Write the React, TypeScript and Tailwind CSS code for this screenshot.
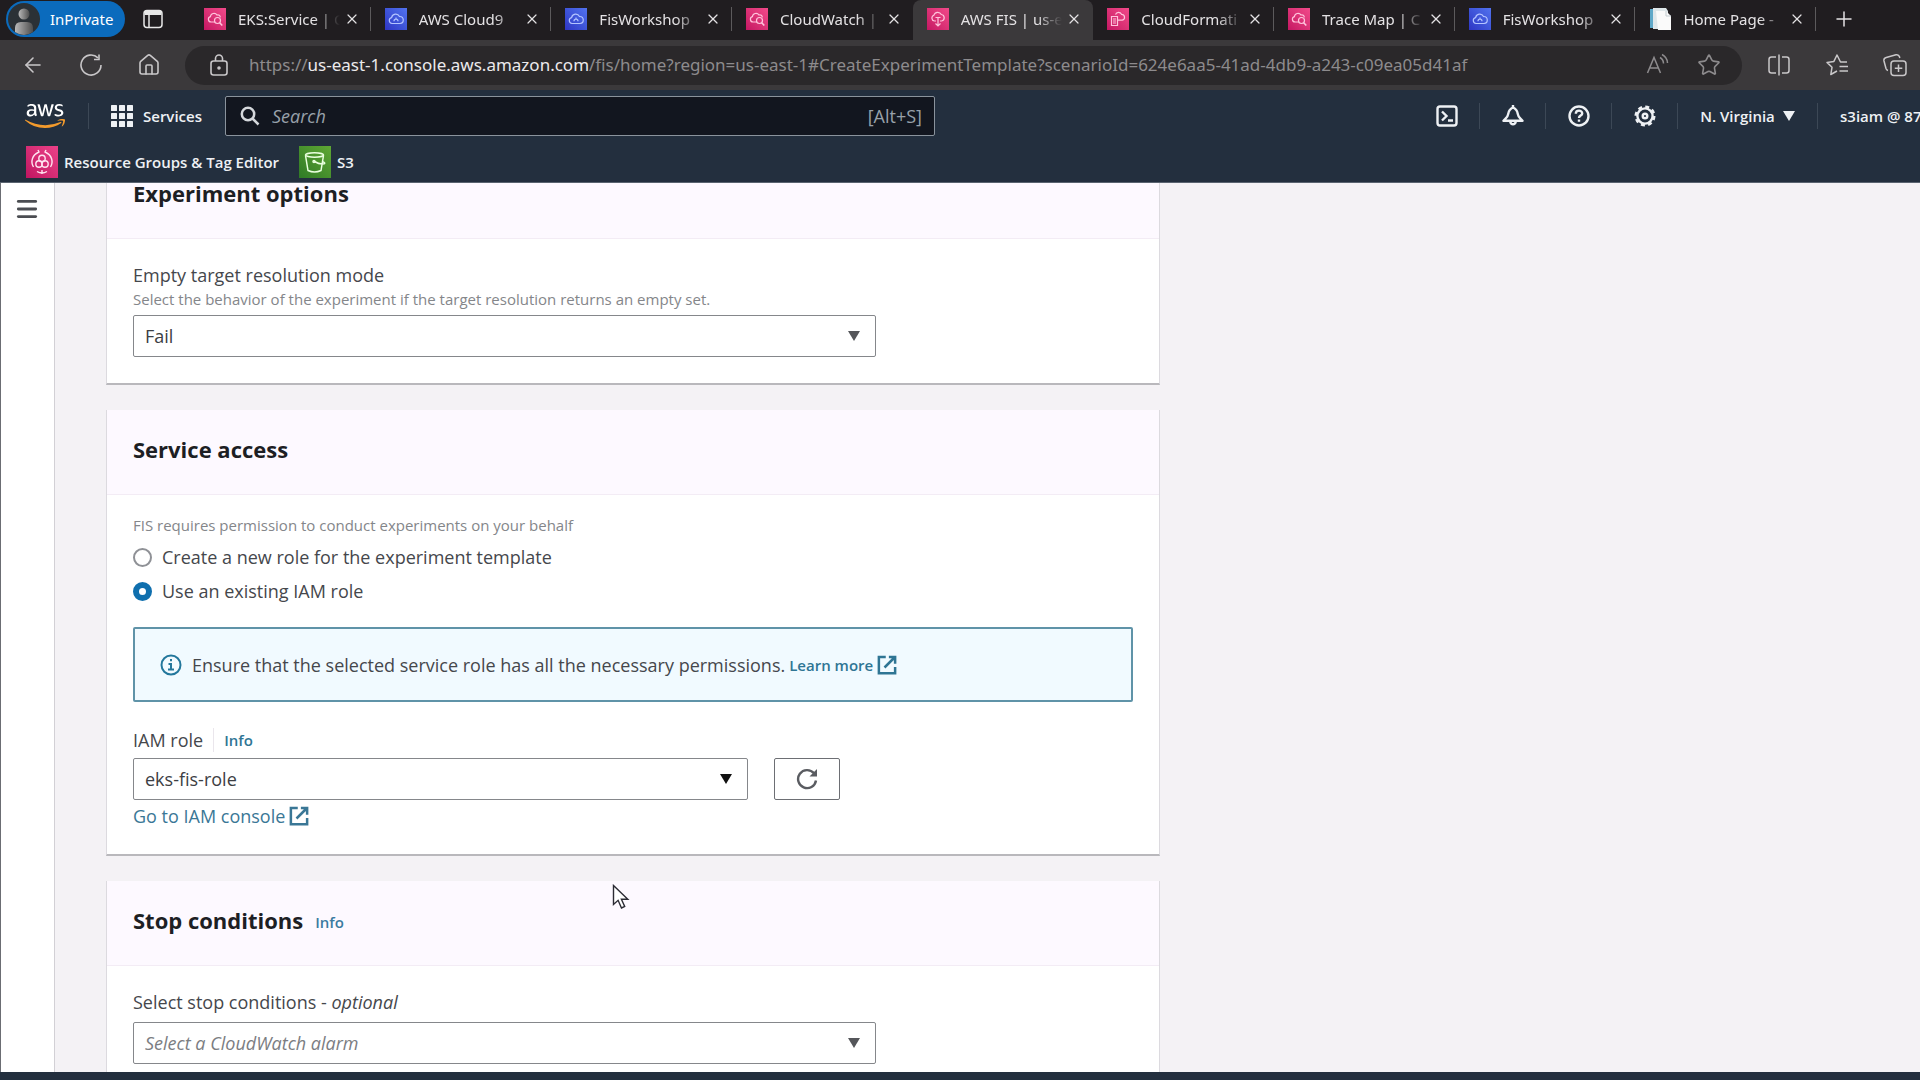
import type { ReactNode } from 'react'
import { ArrowLeft, House, Menu, Plus, Star, X } from 'lucide-react'
import { FaAws } from 'react-icons/fa'

type FaviconKind = 'cloudwatch' | 'cloud9' | 'fis' | 'cloudformation' | 'page'

const tabs: { title: string; icon: FaviconKind; active?: boolean }[] = [
  { title: 'EKS:Service | C', icon: 'cloudwatch' },
  { title: 'AWS Cloud9', icon: 'cloud9' },
  { title: 'FisWorkshop', icon: 'cloud9' },
  { title: 'CloudWatch |', icon: 'cloudwatch' },
  { title: 'AWS FIS | us-e', icon: 'fis', active: true },
  { title: 'CloudFormati', icon: 'cloudformation' },
  { title: 'Trace Map | C', icon: 'cloudwatch' },
  { title: 'FisWorkshop', icon: 'cloud9' },
  { title: 'Home Page -', icon: 'page' },
]

function Favicon({ kind }: { kind: FaviconKind }) {
  if (kind === 'page') {
    return (
      <svg viewBox="0 0 22 22" className="size-[22px] shrink-0">
        <path d="M1 1h4v19H1z" fill="#5fa8c8" />
        <path d="M4 0h13l2 3v18H4z" fill="#dfe7ea" />
        <path d="M7 3h10l5 5v14H9z" fill="#fafafa" />
        <path d="M17 3v5h5" fill="none" stroke="#c3ccd0" />
      </svg>
    )
  }
  return (
    <span
      className={
        kind === 'cloud9'
          ? 'size-[22px] shrink-0 bg-linear-to-tr from-[#2f35c4] to-[#5272ee] text-[#b4c4ff]'
          : 'size-[22px] shrink-0 bg-linear-to-tr from-[#c51563] to-[#f2498a] text-[#ffc4dc]'
      }
    >
      <svg viewBox="0 0 22 22" className="size-[22px]" fill="none" stroke="currentColor" strokeWidth="1.2">
        {kind === 'cloudwatch' && (
          <>
            <path d="M11 14H7a2.700 2.700 0 0 1-.6-5.300A3.600 3.600 0 0 1 13 7a2.400 2.400 0 0 1 3.300 2.400" />
            <circle cx="13.500" cy="12.500" r="3" />
            <path d="m15.700 14.800 2.600 2.700" strokeWidth="1.600" />
          </>
        )}
        {kind === 'cloud9' && (
          <>
            <path d="M7 15.500a3 3 0 0 1-.4-5.900A4.200 4.200 0 0 1 14.500 8.500a3.500 3.500 0 0 1 .5 7z" />
            <path d="M9 13.200a2 2 0 0 1 4 0M11 9.500v1.500" />
          </>
        )}
        {kind === 'fis' && (
          <>
            <path d="M9 13H7.500a3 3 0 0 1-.6-5.800A4 4 0 0 1 14.300 6.500a3.300 3.300 0 0 1 .3 6.500H13" />
            <path d="M11 9v9M8.500 15.500 11 18l2.500-2.500M8.500 9.500h5" />
          </>
        )}
        {kind === 'cloudformation' && (
          <>
            <path d="M8.500 6.500a3.300 3.300 0 0 1 6-.2 3 3 0 0 1 .8 5.900H11" />
            <path d="M4.500 8.500h6v9h-6zM6 11h3M6 13h3M6 15h3" />
          </>
        )}
      </svg>
    </span>
  )
}

function TabStrip() {
  return (
    <div className="flex h-10 shrink-0 items-center bg-[#201d20] text-[15px] text-[#e4e2e4]">
      <div className="flex w-[190px] shrink-0 items-center pb-0.5 pl-1.5">
        <button className="flex h-9 items-center gap-2.5 rounded-full bg-[#0b6bbd] pr-3 pl-0.5 text-white">
          <svg viewBox="0 0 32 32" className="size-8">
            <defs>
              <linearGradient id="avatar">
                <stop offset="0" stopColor="#b9b9b9" />
                <stop offset="1" stopColor="#4d4d4d" />
              </linearGradient>
            </defs>
            <circle cx="16" cy="16" r="16" fill="#2b3136" />
            <circle cx="16" cy="11" r="5.500" fill="url(#avatar)" />
            <path d="M7 29v-4q0-6 6-6h6q6 0 6 6v4q-9 6-18 0" fill="url(#avatar)" />
          </svg>
          InPrivate
        </button>
        <button aria-label="Tab actions" className="ml-[18px]">
          <svg viewBox="0 0 20 20" className="size-5" fill="none" stroke="#e8e8e8" strokeWidth="1.500">
            <rect x="1" y="1.500" width="18" height="17" rx="3" />
            <path d="M1.500 4h17" strokeWidth="4" />
            <path d="M6 6v12" />
          </svg>
        </button>
      </div>
      {tabs.map((tab, i) => (
        <div
          key={i}
          className={
            tab.active
              ? 'flex h-10 min-w-0 flex-1 items-center rounded-t-lg bg-[#3b393b] pb-0.5 pl-3.5'
              : 'flex h-10 min-w-0 flex-1 items-center pb-0.5 pl-3.5'
          }
        >
          <Favicon kind={tab.icon} />
          <span className="ml-3 min-w-0 flex-1 overflow-hidden whitespace-nowrap [mask-image:linear-gradient(to_right,black_75%,transparent)]">
            {tab.title}
          </span>
          <button aria-label="Close tab" className="mr-2.5 ml-1">
            <X size={16} strokeWidth={1.8} />
          </button>
          <span className={tab.active || tabs[i + 1]?.active ? 'h-6 w-px' : 'h-6 w-px bg-[#5c5a5c]'} />
        </div>
      ))}
      <div className="flex w-[104px] shrink-0 pb-0.5 pl-4">
        <button aria-label="New tab">
          <Plus size={24} strokeWidth={1.5} />
        </button>
      </div>
    </div>
  )
}

function AddressBar() {
  return (
    <div className="flex h-[50px] shrink-0 items-center bg-[#3b393b] pr-[13px] pl-[21px] text-[#c9c7c9]">
      <div className="flex gap-[34px]">
        <button aria-label="Back">
          <ArrowLeft size={24} strokeWidth={1.6} />
        </button>
        <button aria-label="Refresh">
          <svg viewBox="0 0 24 24" className="size-6" fill="none" stroke="currentColor" strokeWidth="1.600">
            <path d="M22 12a10 10 0 1 1-3-7.100" />
            <path d="M20 1.500v5h-5" />
          </svg>
        </button>
        <button aria-label="Home">
          <House size={24} strokeWidth={1.6} />
        </button>
      </div>
      <div className="ml-6 flex h-[39px] min-w-0 flex-1 items-center rounded-full bg-[#2a282a] pr-[21px] pl-[22px]">
        <svg viewBox="0 0 24 24" className="size-6 shrink-0" fill="none" stroke="currentColor" strokeWidth="1.600">
          <rect x="4" y="8" width="16" height="14" rx="2.500" />
          <path d="M8.500 8V5.500a3.500 3.500 0 0 1 7 0V8" />
          <circle cx="12" cy="15" r="1" fill="currentColor" />
        </svg>
        <div className="ml-[18px] min-w-0 flex-1 overflow-hidden text-[17px] whitespace-nowrap text-[#8d8b8d]">
          https://<span className="text-[#eceaec]">us-east-1.console.aws.amazon.com</span>
          /fis/home?region=us-east-1#CreateExperimentTemplate?scenarioId=624e6aa5-41ad-4db9-a243-c09ea05d41af
        </div>
        <button aria-label="Read aloud" className="mr-[27px] text-[#8d8b8d]">
          <svg viewBox="0 0 24 24" className="size-6" fill="none" stroke="currentColor" strokeWidth="1.500">
            <path d="M1.500 20 8 4.500 14.500 20M4 15h8M14 4.500a7 7 0 0 1 3.500 6M16 1.500a10 10 0 0 1 5.500 8.500" />
          </svg>
        </button>
        <button aria-label="Add to favorites" className="text-[#8d8b8d]">
          <Star size={24} strokeWidth={1.6} />
        </button>
      </div>
      <div className="ml-[25px] flex gap-[34px]">
        <button aria-label="Split screen">
          <svg viewBox="0 0 24 24" className="size-6" fill="none" stroke="currentColor" strokeWidth="1.500">
            <path d="M9 4H4.500A2.500 2.500 0 0 0 2 6.500v11A2.500 2.500 0 0 0 4.500 20H9M15 4h4.500A2.500 2.500 0 0 1 22 6.500v11a2.500 2.500 0 0 1-2.500 2.500H15M12 1.500v21" />
          </svg>
        </button>
        <button aria-label="Favorites">
          <svg viewBox="0 0 24 24" className="size-6" fill="none" stroke="currentColor" strokeWidth="1.500" strokeLinejoin="round">
            <path d="M22 9h-6.500L12 2 8.900 8.400 2 9.400l5 4.900L5.800 21.500 12 18M14.500 13.500H23M14.500 18H23" />
          </svg>
        </button>
        <button aria-label="Collections">
          <svg viewBox="0 0 24 24" className="size-6" fill="none" stroke="currentColor" strokeWidth="1.500">
            <rect x="8" y="8" width="15" height="14.500" rx="3" />
            <path d="M15.500 11.500v7.500M11.800 15.200h7.500M5 17.500a3 3 0 0 1-2-2L1 8a3 3 0 0 1 2.200-3.500L13 1.800a3 3 0 0 1 3.500 2l.3 1.200" />
          </svg>
        </button>
      </div>
    </div>
  )
}

function NavCell({ label, children }: { label: string; children: ReactNode }) {
  return (
    <button aria-label={label} className="flex h-[26px] w-[66px] items-center justify-center border-r border-[#3c4856]">
      <svg viewBox="0 0 22 22" className="size-[22px]" fill="none" stroke="currentColor" strokeWidth="2.400">
        {children}
      </svg>
    </button>
  )
}

function ConsoleNav() {
  return (
    <header className="flex h-[93px] shrink-0 flex-col border-b border-[#5a6470] bg-[#232f3e] text-[15px] text-[#eef1f4]">
      <div className="flex h-[52px] items-center">
        <svg className="size-0">
          <linearGradient id="aws" x1="0" y1="0" x2="0" y2="1">
            <stop offset="0.620" stopColor="#ffffff" />
            <stop offset="0.620" stopColor="#f29a2c" />
          </linearGradient>
        </svg>
        <a href="#home" aria-label="AWS" className="flex h-[26px] w-[89px] items-center border-r border-[#3c4856] pl-[25px]">
          <FaAws size={40} className="w-10 fill-[url(#aws)]" />
        </a>
        <button className="ml-[22px] flex w-[114px] items-center gap-2.5 font-semibold">
          <svg viewBox="0 0 22 22" className="size-[22px]" fill="currentColor">
            {[0, 8, 16].map((y) => [0, 8, 16].map((x) => <rect key={`${x}-${y}`} x={x} y={y} width="6" height="6" rx="0.500" />))}
          </svg>
          Services
        </button>
        <label className="flex h-10 w-[710px] items-center rounded-xs border border-[#8a939c] bg-[#12161f] pr-3 pl-3.5 text-[#98a1aa]">
          <svg viewBox="0 0 20 20" className="size-5 shrink-0" fill="none" stroke="#d5d8dc" strokeWidth="2.500">
            <circle cx="8" cy="8" r="6.200" />
            <path d="m12.500 12.500 6 6" />
          </svg>
          <input
            type="search"
            aria-label="Search"
            placeholder="Search"
            className="ml-3 min-w-0 flex-1 bg-transparent text-lg outline-none placeholder:text-[#98a1aa] placeholder:italic"
          />
          <span className="text-lg">[Alt+S]</span>
        </label>
        <div className="ml-auto flex items-center overflow-hidden font-semibold">
          <NavCell label="CloudShell">
            <rect x="1.500" y="1.500" width="19" height="19" rx="2.500" />
            <path d="m6 6.500 4.500 4.500L6 15.500M12 15.500h5" />
          </NavCell>
          <NavCell label="Notifications">
            <path d="M11 2.500c-3.500 1.500-4.500 4-4.800 6.500C6 12 3.500 13.500 1.500 15.800h19c-2-2.300-4.500-3.800-4.700-6.800-.3-2.500-1.300-5-4.800-6.500Z" strokeLinejoin="round" />
            <path d="M8.200 16.500a2.900 3.800 0 0 0 5.600 0M11 0v2.500" />
          </NavCell>
          <NavCell label="Help">
            <circle cx="11" cy="11" r="9.500" />
            <path d="M7.800 8.800c0-4.200 6.400-4 6.400-.4 0 2.200-3.200 2.200-3.200 4.600M11 14.500v2.200" />
          </NavCell>
          <NavCell label="Settings">
            <circle cx="11" cy="11" r="7.600" />
            <circle cx="11" cy="11" r="9.300" strokeDasharray="4 3.300" />
            <circle cx="11" cy="11" r="2.300" />
          </NavCell>
          <button className="flex h-[26px] w-[140px] items-center justify-center gap-2 border-r border-[#3c4856]">
            N. Virginia
            <Caret />
          </button>
          <button className="w-[102px] pl-[22px] text-left whitespace-nowrap">s3iam @ 87</button>
        </div>
      </div>
      <div className="flex h-10 items-center pl-[26px] font-semibold">
        <a href="#resource-groups" className="flex items-center gap-1.5">
          <span className="bg-linear-to-tr from-[#c01461] to-[#ec4189]">
            <svg viewBox="0 0 32 32" className="size-8" fill="none" stroke="#ffe3ef" strokeWidth="1.400">
              <path d="M12 6.500a10 10 0 0 0-4.500 14.500M20 6.500a10 10 0 0 1 4.500 14.500M11 25.500a10 10 0 0 0 10 0M16 24v4M10 8l3-2-1-2M22 8l-3-2 1-2" />
              <circle cx="16" cy="12.500" r="3.200" />
              <circle cx="13" cy="18" r="3.200" />
              <circle cx="19" cy="18" r="3.200" />
            </svg>
          </span>
          Resource Groups &amp; Tag Editor
        </a>
        <a href="#s3" className="ml-5 flex items-center gap-1.5">
          <span className="bg-linear-to-tr from-[#2f7a26] to-[#5fa834]">
            <svg viewBox="0 0 32 32" className="size-8" fill="none" stroke="#eaffdf" strokeWidth="1.500">
              <ellipse cx="15.500" cy="9" rx="9" ry="2.200" />
              <path d="M6.500 9.500 9 24.500q6.500 3 13 0l2.500-15M15.500 15.500q5 3 9.500 2.300 2-.8-1.500-2.500" />
              <circle cx="15" cy="15.500" r="1" />
            </svg>
          </span>
          S3
        </a>
      </div>
    </header>
  )
}

function Caret() {
  return (
    <svg viewBox="0 0 12 10" className="h-2.5 w-3" fill="currentColor">
      <path d="M0 0h12L6 10z" />
    </svg>
  )
}

function ExternalIcon() {
  return (
    <svg viewBox="0 0 16 16" className="size-5" fill="none" stroke="currentColor" strokeWidth="2">
      <path d="M9.500 1.500h5V7M6 10l8-8M14.500 9.500v5h-13v-13H7" />
    </svg>
  )
}

function Card({ title, info, children }: { title: string; info?: boolean; children: ReactNode }) {
  return (
    <section className="max-w-[1054px] border-x border-b-2 border-x-[#dcdadf] border-b-[#b9b8bc] bg-white">
      <div className="flex h-[85px] items-center gap-3 border-b border-[#f3ecf5] bg-[#fdf9ff] px-[26px] pt-0.5 pb-2">
        <h2 className="text-[22px] font-bold text-[#1d1f24]">{title}</h2>
        {info && (
          <a href="#info" className="mt-1 text-[15px] font-semibold text-[#3a7ba0]">
            Info
          </a>
        )}
      </div>
      {children}
    </section>
  )
}

type SelectProps = { id: string; value: string; className: string; placeholder?: boolean; dark?: boolean }

function Select({ id, value, className, placeholder, dark }: SelectProps) {
  return (
    <div className={`relative ${className}`}>
      <select
        id={id}
        className={
          placeholder
            ? 'h-[42px] w-full appearance-none rounded-xs border border-[#85878b] bg-white pl-[11px] text-lg text-[#7b7d82] italic'
            : 'h-[42px] w-full appearance-none rounded-xs border border-[#85878b] bg-white pl-[11px] text-lg text-[#3c3e43]'
        }
      >
        <option>{value}</option>
      </select>
      <span
        className={
          dark
            ? 'pointer-events-none absolute top-4 right-4 text-[#111111]'
            : 'pointer-events-none absolute top-4 right-4 text-[#55565a]'
        }
      >
        <Caret />
      </span>
    </div>
  )
}

export default function App() {
  return (
    <div className="flex h-screen flex-col overflow-hidden bg-[#f4f2f5] font-['Noto_Sans',sans-serif]">
      <TabStrip />
      <AddressBar />
      <div className="flex min-h-0 flex-1 flex-col font-['Open_Sans',sans-serif]">
        <ConsoleNav />
        <div className="flex min-h-0 flex-1 border-l border-[#6b6d73]">
          <aside className="w-[54px] shrink-0 border-r border-[#d2d0d5] bg-white pt-[13px] pl-[13px]">
            <button aria-label="Open navigation" className="text-[#4b4d52]">
              <Menu size={26} strokeWidth={2.6} />
            </button>
          </aside>
          <main className="min-w-0 flex-1 overflow-hidden pl-[51px]">
            {/* form is scrolled part way down, first card header runs under the nav */}
            <form className="-mt-[29px] flex flex-col gap-[25px] text-lg leading-6 text-[#45474c]">
              <Card title="Experiment options">
                <div className="flex flex-col px-[26px] pt-6 pb-[26px]">
                  <label htmlFor="mode">Empty target resolution mode</label>
                  <p className="text-[15px] leading-6 text-[#84868a]">
                    Select the behavior of the experiment if the target resolution returns an empty set.
                  </p>
                  <Select id="mode" value="Fail" className="mt-1 w-[743px]" />
                </div>
              </Card>

              <Card title="Service access">
                <div className="flex flex-col px-[26px] pt-5 pb-[26px]">
                  <p className="text-[15px] leading-5 text-[#84868a]">
                    FIS requires permission to conduct experiments on your behalf
                  </p>
                  <label className="mt-2.5 flex items-center gap-2.5">
                    <input
                      type="radio"
                      name="role"
                      className="size-[19px] appearance-none rounded-full border-2 border-[#8f9196] bg-white checked:border-[6px] checked:border-[#0f6fae]"
                    />
                    Create a new role for the experiment template
                  </label>
                  <label className="mt-2.5 flex items-center gap-2.5">
                    <input
                      type="radio"
                      name="role"
                      defaultChecked
                      className="size-[19px] appearance-none rounded-full border-2 border-[#8f9196] bg-white checked:border-[6px] checked:border-[#0f6fae]"
                    />
                    Use an existing IAM role
                  </label>

                  <div className="mt-6 flex h-[75px] items-center rounded-xs border-2 border-[#5f93a8] bg-[#f1faff] px-[25px]">
                    <svg viewBox="0 0 22 22" className="size-[22px]" fill="none" stroke="#23779c" strokeWidth="2">
                      <circle cx="11" cy="11" r="9.500" />
                      <path d="M11 5v2.200M8.500 10H11v5.500M8 15.500h6" />
                    </svg>
                    <span className="ml-2.5">
                      Ensure that the selected service role has all the necessary permissions.
                    </span>
                    <a href="#learn-more" className="ml-1 flex items-center gap-1 text-[15px] font-semibold text-[#2f7594]">
                      Learn more
                      <ExternalIcon />
                    </a>
                  </div>

                  <div className="mt-[26px] flex items-center">
                    <label htmlFor="iam-role">IAM role</label>
                    <a href="#info" className="ml-2.5 border-l border-[#eae6ec] pl-2.5 text-[15px] leading-6 font-semibold text-[#2f7594]">
                      Info
                    </a>
                  </div>
                  <div className="mt-1.5 flex gap-[26px]">
                    <Select id="iam-role" value="eks-fis-role" className="w-[615px]" dark />
                    <button
                      type="button"
                      aria-label="Refresh roles"
                      className="flex h-[42px] w-[66px] items-center justify-center rounded-xs border border-[#6d6f74] bg-white text-[#5a5c61]"
                    >
                      <svg viewBox="0 0 22 22" className="size-[22px]" fill="none" stroke="currentColor" strokeWidth="2.400">
                        <path d="M20 12.500a9 9 0 1 1-2-7.200" />
                        <path d="M21 1v7.500h-7.500z" fill="currentColor" stroke="none" />
                      </svg>
                    </button>
                  </div>
                  <a href="#iam" className="mt-1 flex items-center gap-1 text-[#3a7796]">
                    Go to IAM console
                    <ExternalIcon />
                  </a>
                </div>
              </Card>

              <Card title="Stop conditions" info>
                <div className="flex flex-col px-[26px] pt-6 pb-[26px]">
                  <label htmlFor="stop">
                    Select stop conditions - <i>optional</i>
                  </label>
                  <Select id="stop" value="Select a CloudWatch alarm" className="mt-2 w-[743px]" placeholder />
                </div>
              </Card>
            </form>
          </main>
        </div>
        <div className="h-2 shrink-0 bg-[#232f3e]" />
      </div>

      <svg viewBox="0 0 18 26" className="pointer-events-none absolute top-[884px] left-[612px] h-[26px] w-[18px]">
        <path d="M1.500 1.500v19l4.600-4.200 3.400 7.700 3.200-1.500-3.300-7.200h6.400z" fill="#ffffff" stroke="#2b2b33" strokeWidth="1.400" />
      </svg>
    </div>
  )
}
